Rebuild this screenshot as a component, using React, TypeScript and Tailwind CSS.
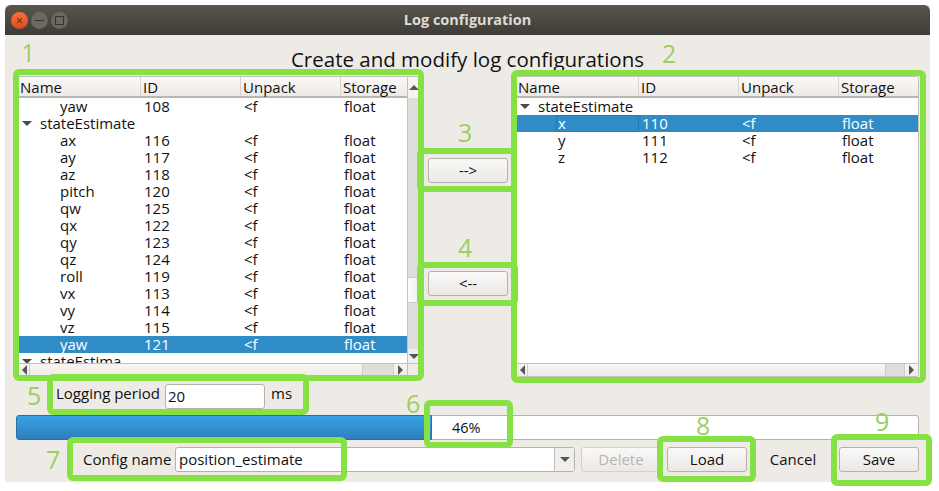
const font = "font-['Open_Sans','Noto_Sans',sans-serif]"

const leftRows = [
  ["ax", "116"], ["ay", "117"], ["az", "118"], ["pitch", "120"], ["qw", "125"], ["qx", "122"],
  ["qy", "123"], ["qz", "124"], ["roll", "119"], ["vx", "113"], ["vy", "114"], ["vz", "115"],
]

function Header() {
  return (
    <div className="flex h-[21px] shrink-0 border-b-2 border-[#b9b6b1] bg-gradient-to-b from-[#fbf9f8] to-[#ece9e6] text-[15px] leading-[20px]">
      <div className="w-[122px] border-r border-[#d8d5d1] pl-[1px]">Name</div>
      <div className="w-[100px] border-r border-[#d8d5d1] pl-[2px]">ID</div>
      <div className="w-[100px] border-r border-[#d8d5d1] pl-[2px]">Unpack</div>
      <div className="flex-1 pl-[2px]">Storage</div>
    </div>
  )
}

function Row({ name, id, selected, focused }: { name: string; id: string; selected?: boolean; focused?: boolean }) {
  return (
    <div className={`relative flex h-[17px] shrink-0 text-[15px] leading-[17px] ${selected ? "bg-[#308cc6] text-white" : ""}`}>
      {focused && <div className="absolute left-[39px] top-0 h-[17px] w-[83px] border border-[#2a78ab]" />}
      <div className="w-[122px] pl-[41px]">{name}</div>
      <div className="w-[100px] pl-[3px]">{id}</div>
      <div className="w-[100px] pl-[3px]">&lt;f</div>
      <div className="flex-1 pl-[3px]">float</div>
    </div>
  )
}

function Group({ name }: { name: string }) {
  return (
    <div className="flex h-[17px] shrink-0 items-center text-[15px] leading-[17px]">
      <span className="ml-[3px] mr-[8px] h-0 w-0 border-x-[5px] border-t-[5px] border-x-transparent border-t-[#4a4a4a]" />
      {name}
    </div>
  )
}

function Arrow({ dir }: { dir: "up" | "down" | "left" | "right" }) {
  const cls = {
    up: "border-x-[5px] border-b-[5px] border-x-transparent border-b-[#555]",
    down: "border-x-[5px] border-t-[5px] border-x-transparent border-t-[#555]",
    left: "border-y-[5px] border-r-[5px] border-y-transparent border-r-[#555]",
    right: "border-y-[5px] border-l-[5px] border-y-transparent border-l-[#555]",
  }[dir]
  return <span className={`h-0 w-0 ${cls}`} />
}

function HScroll({ thumb }: { thumb: string }) {
  return (
    <div className="flex h-[13px] shrink-0 items-center border-t border-[#c4c1bc] bg-gradient-to-b from-[#f8f6f4] to-[#eeebe8]">
      <div className="flex h-full w-[11px] items-center justify-center border-r border-[#d0cdc8]"><Arrow dir="left" /></div>
      <div className="h-full flex-1" />
      <div className={`h-full border-x border-[#d0cdc8] bg-[#e0deda] ${thumb}`} />
      <div className="flex h-full w-[13px] items-center justify-center"><Arrow dir="right" /></div>
    </div>
  )
}

function Btn({ label, className = "" }: { label: string; className?: string }) {
  return (
    <div className={`flex h-[25px] w-[80px] items-center justify-center rounded-[3px] border border-[#b5b2ad] bg-gradient-to-b from-[#faf9f8] to-[#ebe8e5] text-[15px] ${className}`}>
      {label}
    </div>
  )
}

function Mark({ className }: { className: string }) {
  return <div className={`absolute rounded-[6px] border-[6px] border-[#85e144] ${className}`} />
}

function Num({ n, className }: { n: string; className: string }) {
  return <div className={`absolute text-[25px] leading-[28px] text-[#9bcf5f] ${className}`}>{n}</div>
}

export default function App() {
  return (
    <div className={`relative h-[491px] w-[939px] overflow-hidden bg-white text-[#111] ${font}`}>
      <div className="ml-[5px] mt-[5px] flex h-[477px] w-[925px] flex-col bg-[#eeebe7]">
        {/* Title bar */}
        <div className="relative flex h-[30px] shrink-0 items-center justify-center rounded-t-[6px] bg-gradient-to-b from-[#5a564e] to-[#3e3c37]">
          <div className="absolute left-[6px] top-[7px] flex gap-[3px]">
            <div className="flex h-[17px] w-[17px] items-center justify-center rounded-full bg-gradient-to-b from-[#f3733f] to-[#d9491c] text-[12px] leading-none text-[#5c2410]">×</div>
            <div className="flex h-[17px] w-[17px] items-center justify-center rounded-full bg-[#6b6860]"><span className="h-[1px] w-[9px] bg-[#35332e]" /></div>
            <div className="flex h-[17px] w-[17px] items-center justify-center rounded-full bg-[#6b6860]"><span className="h-[9px] w-[9px] border border-[#35332e]" /></div>
          </div>
          <span className="text-[14.5px] font-bold text-[#dfdbd2]">Log configuration</span>
        </div>

        <div className="h-[41px] shrink-0 pt-[11px] text-center text-[20.5px] leading-[26px]">Create and modify log configurations</div>

        {/* Trees and move buttons */}
        <div className="ml-[13px] flex h-[301px] shrink-0">
          <div className="flex w-[402px] overflow-hidden rounded-[3px] border border-[#c4c1bc] bg-white">
            <div className="flex w-[388px] flex-col overflow-hidden">
              <Header />
              <div className="flex h-[265px] flex-col overflow-hidden">
                <Row name="yaw" id="108" />
                <Group name="stateEstimate" />
                {leftRows.map(([n, id]) => <Row key={n} name={n} id={id} />)}
                <Row name="yaw" id="121" selected />
                <Group name="stateEstima" />
              </div>
              <HScroll thumb="w-[32px]" />
            </div>
            <div className="flex flex-1 flex-col border-l border-[#c4c1bc] bg-[#e0deda]">
              <div className="flex h-[21px] items-center justify-center bg-[#f6f4f2]"><Arrow dir="up" /></div>
              <div className="h-[179px]" />
              <div className="h-[26px] border-y border-[#d0cdc8] bg-gradient-to-r from-[#fbfafa] to-[#f1efec]" />
              <div className="h-[46px]" />
              <div className="flex h-[14px] items-center justify-center bg-[#f1efec]"><Arrow dir="down" /></div>
              <div className="h-[13px] border-t border-[#c4c1bc] bg-[#eeebe8]" />
            </div>
          </div>

          <div className="flex w-[96px] shrink-0 flex-col items-center pt-[82px]">
            <Btn label="-->" />
            <Btn label="<--" className="mt-[88px]" />
          </div>

          <div className="flex w-[403px] flex-col overflow-hidden rounded-[3px] border border-[#c4c1bc] bg-white">
            <Header />
            <div className="flex h-[265px] flex-col">
              <Group name="stateEstimate" />
              <Row name="x" id="110" selected focused />
              <Row name="y" id="111" />
              <Row name="z" id="112" />
            </div>
            <HScroll thumb="w-[20px]" />
          </div>
        </div>

        {/* Logging period */}
        <div className="ml-[51px] mt-[7px] flex h-[25px] shrink-0 items-center text-[15px]">
          <span className="mb-[7px] w-[109px]">Logging period</span>
          <div className="flex h-[25px] w-[100px] items-center rounded-[3px] border border-[#b5b2ad] bg-white pl-[2px]">20</div>
          <span className="mb-[7px] ml-[6px]">ms</span>
        </div>

        {/* Progress */}
        <div className="ml-[11px] mt-[6px] flex h-[25px] w-[903px] shrink-0 items-center text-[14.5px]">
          <div className="h-[25px] w-[416px] rounded-l-[3px] border border-[#2a6ea5] bg-gradient-to-b from-[#39a2e6] to-[#2c7fbd]" />
          <div className="flex h-[25px] flex-1 items-center rounded-r-[3px] border border-l-0 border-[#b5b2ad] bg-white pl-[20px]">46%</div>
        </div>

        {/* Bottom bar */}
        <div className="mt-[7px] flex h-[25px] shrink-0 items-center text-[15px]">
          <span className="ml-[78px] w-[92px]">Config name</span>
          <div className="flex h-[25px] w-[400px] items-center rounded-[3px] border border-[#b5b2ad] bg-white">
            <span className="flex-1 pl-[3px]">position_estimate</span>
            <div className="flex h-full w-[20px] items-center justify-center border-l border-[#c4c1bc] bg-[#f1efec]"><Arrow dir="down" /></div>
          </div>
          <Btn label="Delete" className="ml-[6px] border-[#d4d1cc] text-[#b8b5b0]" />
          <Btn label="Load" className="ml-[6px]" />
          <div className="ml-[6px] flex w-[80px] items-center justify-center">Cancel</div>
          <Btn label="Save" className="ml-[6px]" />
        </div>
      </div>

      {/* Annotation frames */}
      <Mark className="left-[13px] top-[69px] h-[312px] w-[411px]" />
      <Mark className="left-[511px] top-[70px] h-[313px] w-[415px]" />
      <Mark className="left-[417px] top-[148px] h-[44px] w-[100px]" />
      <Mark className="left-[417px] top-[262px] h-[44px] w-[101px]" />
      <Mark className="left-[47px] top-[374px] h-[41px] w-[262px]" />
      <Mark className="left-[424px] top-[400px] h-[48px] w-[89px]" />
      <Mark className="left-[67px] top-[437px] h-[44px] w-[280px]" />
      <Mark className="left-[657px] top-[436px] h-[46px] w-[99px]" />
      <Mark className="left-[831px] top-[434px] h-[52px] w-[101px]" />
      <Num n="1" className="left-[21px] top-[38px]" />
      <Num n="2" className="left-[662px] top-[39px]" />
      <Num n="3" className="left-[458px] top-[118px]" />
      <Num n="4" className="left-[458px] top-[233px]" />
      <Num n="5" className="left-[27px] top-[381px]" />
      <Num n="6" className="left-[406px] top-[389px]" />
      <Num n="7" className="left-[46px] top-[445px]" />
      <Num n="8" className="left-[696px] top-[411px]" />
      <Num n="9" className="left-[875px] top-[407px]" />
    </div>
  )
}
